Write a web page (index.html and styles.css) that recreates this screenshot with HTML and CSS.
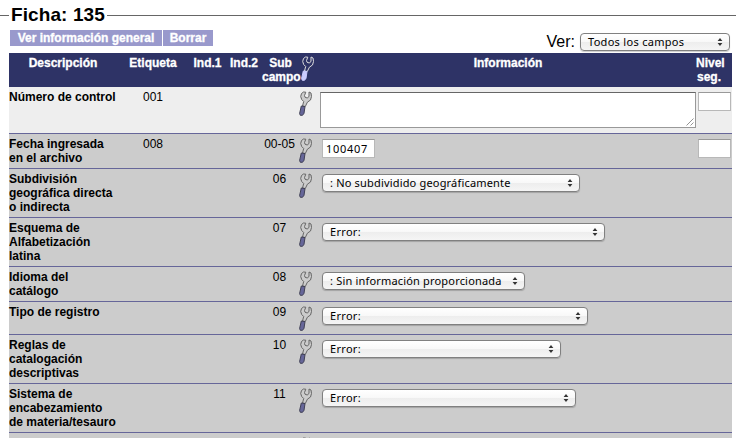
FILE: index.html
```
<!DOCTYPE html>
<html lang="es">
<head>
<meta charset="utf-8">
<title>Ficha: 135</title>
<link rel="stylesheet" href="styles.css">
</head>
<body>
<svg class="defs" aria-hidden="true">
  <symbol id="wrench" viewBox="0 0 14 25">
    <path class="metal" d="M4.5 1 L2.5 2.5 L1.7 5.5 L2.7 8.5 L4.7 10.5 L3.5 15 L6.3 15.5 L8.4 11.2 L11.5 9 L12.5 5.5 L12 2 L10 1 L10 5.5 L8.2 7 L6 6.2 L5.5 4.5 L6.8 1.2 Z"/>
    <path class="handle" d="M2.3 15 L6 15.6 L5 22.3 L3.5 24.3 L1.3 24.3 L0.6 22.5 Z"/>
  </symbol>
  <symbol id="arrows" viewBox="0 0 6 8">
    <path d="M3 0 L5.4 3 H.6Z M3 8 L5.4 5 H.6Z"/>
  </symbol>
</svg>
<main class="page">
  <h1 class="legend"><span>Ficha: 135</span></h1>
  <div class="toolbar">
    <nav class="actions"><a class="general">Ver información general</a><a class="delete">Borrar</a></nav>
    <div class="view"><span>Ver:</span><div class="select w150"><b>Todos los campos</b><svg><use href="#arrows"/></svg></div></div>
  </div>
  <section class="table">
    <div class="row head">
      <div>Descripción</div><div>Etiqueta</div><div>Ind.1</div><div>Ind.2</div><div>Sub<br>campo</div>
      <div><svg class="wrench"><use href="#wrench"/></svg></div><div>Información</div><div class="level">Nivel<br>seg.</div>
    </div>
    <div class="row first">
      <div class="desc">Número de control</div><div>001</div><div></div><div></div><div></div>
      <div><svg class="wrench"><use href="#wrench"/></svg></div>
      <div><div class="area"><svg viewBox="0 0 8 8"><path d="M.5 7.5 L7.5 .5 M4.5 7.5 L7.5 4.5"/></svg></div></div><div><div class="input small"></div></div>
    </div>
    <div class="row">
      <div class="desc">Fecha ingresada<br>en el archivo</div><div>008</div><div></div><div></div><div class="sub">00-05</div>
      <div><svg class="wrench"><use href="#wrench"/></svg></div>
      <div class="field"><div class="input">100407</div></div><div><div class="input small"></div></div>
    </div>
    <div class="row">
      <div class="desc">Subdivisión<br>geográfica directa<br>o indirecta</div><div></div><div></div><div></div><div class="sub">06</div>
      <div><svg class="wrench"><use href="#wrench"/></svg></div>
      <div class="field"><div class="select w258"><b class="tight">: No subdividido geográficamente</b><svg><use href="#arrows"/></svg></div></div><div></div>
    </div>
    <div class="row">
      <div class="desc">Esquema de<br>Alfabetización<br>latina</div><div></div><div></div><div></div><div class="sub">07</div>
      <div><svg class="wrench"><use href="#wrench"/></svg></div>
      <div class="field"><div class="select w283"><b>Error:</b><svg><use href="#arrows"/></svg></div></div><div></div>
    </div>
    <div class="row">
      <div class="desc">Idioma del<br>catálogo</div><div></div><div></div><div></div><div class="sub">08</div>
      <div><svg class="wrench"><use href="#wrench"/></svg></div>
      <div class="field"><div class="select w203"><b class="tight">: Sin información proporcionada</b><svg><use href="#arrows"/></svg></div></div><div></div>
    </div>
    <div class="row">
      <div class="desc">Tipo de registro</div><div></div><div></div><div></div><div class="sub">09</div>
      <div><svg class="wrench"><use href="#wrench"/></svg></div>
      <div class="field"><div class="select w266"><b>Error:</b><svg><use href="#arrows"/></svg></div></div><div></div>
    </div>
    <div class="row">
      <div class="desc">Reglas de<br>catalogación<br>descriptivas</div><div></div><div></div><div></div><div class="sub">10</div>
      <div><svg class="wrench"><use href="#wrench"/></svg></div>
      <div class="field"><div class="select w239"><b>Error:</b><svg><use href="#arrows"/></svg></div></div><div></div>
    </div>
    <div class="row">
      <div class="desc">Sistema de<br>encabezamiento<br>de materia/tesauro</div><div></div><div></div><div></div><div class="sub">11</div>
      <div><svg class="wrench"><use href="#wrench"/></svg></div>
      <div class="field"><div class="select w254"><b>Error:</b><svg><use href="#arrows"/></svg></div></div><div></div>
    </div>
    <div class="row">
      <div class="desc"></div><div></div><div></div><div></div><div></div>
      <div><svg class="wrench"><use href="#wrench"/></svg></div><div></div><div></div>
    </div>
  </section>
</main>
</body>
</html>
```
FILE: styles.css
```
* { box-sizing: border-box; }
body { margin: 0; background: #fff; color: #000; font-family: "Liberation Sans", Arial, sans-serif; }
.defs { display: none; }
.page { width: 736px; height: 438px; overflow: hidden; padding-top: 3px; }
.legend { margin: 0; height: 24px; display: flex; align-items: center; font-size: 19px; line-height: 24px; white-space: nowrap; }
.legend::before { content: ""; width: 9px; height: 1px; background: #666; }
.legend::after { content: ""; flex: 1; height: 1px; background: #666; }
.legend span { padding: 0 2px; letter-spacing: .1px; }
.toolbar { height: 26px; display: flex; justify-content: space-between; padding: 3px 6px 0 10px; }
.actions { display: flex; gap: 1px; height: 16px; }
.actions a { background: #9999cc; color: #fff; font-size: 12px; font-weight: bold; line-height: 16px; text-align: center; white-space: nowrap; -webkit-text-stroke: .3px #fff; }
.general { width: 152px; letter-spacing: 0; }
.delete { width: 50px; }
.view { display: flex; gap: 5px; padding-top: 3px; height: 23px; font-size: 16px; line-height: 17px; }
.select { height: 18px; border: 1px solid #808080; border-radius: 4px; background: linear-gradient(#fff, #f8f8f8 49%, #ededed 50%, #f5f5f5); box-shadow: 0 1px 1px #0003; display: flex; align-items: center; justify-content: space-between; padding: 0 6px 0 7px; color: #000; font: 11px/16px "Noto Sans", sans-serif; white-space: nowrap; }
.select b { font-weight: normal; letter-spacing: .3px; }
.select .tight { letter-spacing: .18px; }
.select svg { width: 6px; height: 8px; fill: #333; }
.w150 { width: 150px; }
.w258 { width: 258px; }
.w283 { width: 283px; }
.w203 { width: 203px; }
.w266 { width: 266px; }
.w239 { width: 239px; }
.w254 { width: 254px; }
.table { width: 723px; margin-left: 9px; }
.row { --metal: #ccc; --outline: #666; --grip: #666699; --grip-line: #404055; display: grid; grid-template-columns: 108px 72px 37px 36px 37px 20px 378px 35px; padding: 3px 0; min-height: 33px; border-bottom: 1px solid #666699; background: #ccc; font-size: 12px; line-height: 14px; text-align: center; white-space: nowrap; }
.row.first { height: 47px; background: #eee; }
.row.head { --metal: #2e3366; --outline: #ddd; --grip: #ccccff; --grip-line: #ccccff; height: 34px; border: 0; background: #2e3366; color: #fff; font-weight: bold; -webkit-text-stroke: .3px #fff; }
.row .desc { text-align: left; font-weight: bold; }
.row .sub { padding-right: 2px; }
.level { text-align: left; text-indent: -1px; }
.wrench { display: block; width: 14px; height: 25px; margin: 1px 0 0 0; stroke-width: 1; overflow: visible; }
.head .wrench { margin: 0 0 0 2px; }
.metal { fill: var(--metal); stroke: var(--outline); }
.handle { fill: var(--grip); stroke: var(--grip-line); }
.area { width: 376px; height: 36px; margin: 2px 0 0 1px; border: 1px solid #999; border-top-color: #666; background: #fff; display: flex; align-items: flex-end; justify-content: flex-end; padding: 1px; }
.area svg { width: 8px; height: 8px; stroke: #777; stroke-width: .8; }
.field { padding: 2px 0 0 3px; }
.input { width: 53px; height: 19px; border: 1px solid #b8b8b8; border-top-color: #999; background: #fff; padding-left: 3px; font: 11px/18px "Noto Sans", sans-serif; letter-spacing: .7px; text-align: left; }
.input.small { width: 33px; margin: 2px 0 0 1px; }
```
